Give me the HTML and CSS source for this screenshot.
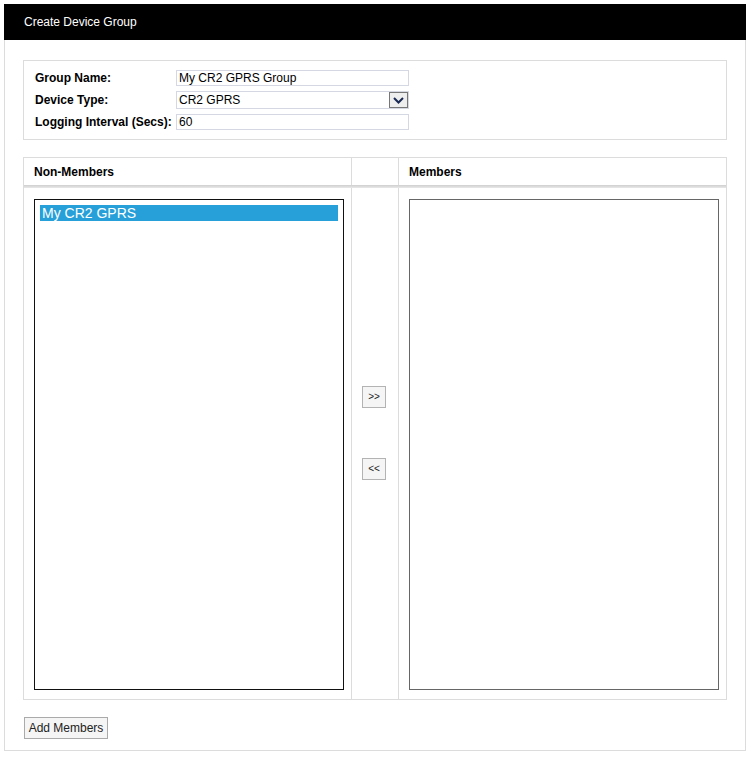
FILE: index.html
```html
<!DOCTYPE html>
<html>
<head>
<meta charset="utf-8">
<title>Create Device Group</title>
<link rel="stylesheet" href="styles.css">
</head>
<body>
<div class="panel">
  <div class="panel-title">Create Device Group</div>
  <div class="panel-body">
    <div class="form-box">
      <div class="form-row">
        <label class="form-label">Group Name:</label>
        <div class="text-input">My CR2 GPRS Group</div>
      </div>
      <div class="form-row">
        <label class="form-label">Device Type:</label>
        <div class="select-input">
          <span class="select-value">CR2 GPRS</span>
          <span class="select-btn">
            <svg width="11" height="7" viewBox="0 0 11 7"><path d="M1 1 L5.5 5.5 L10 1" fill="none" stroke="#1a2a55" stroke-width="2"/></svg>
          </span>
        </div>
      </div>
      <div class="form-row">
        <label class="form-label">Logging Interval (Secs):</label>
        <div class="text-input">60</div>
      </div>
    </div>

    <div class="members-table">
      <div class="mt-head">
        <div class="mt-cell mt-col1">Non-Members</div>
        <div class="mt-cell mt-col2"></div>
        <div class="mt-cell mt-col3">Members</div>
      </div>
      <div class="mt-shadow"></div>
      <div class="mt-body">
        <div class="mt-col1 mt-pad">
          <div class="listbox listbox-dark">
            <div class="list-item selected">My CR2 GPRS</div>
          </div>
        </div>
        <div class="mt-col2 mt-mid">
          <button class="move-btn">&gt;&gt;</button>
          <button class="move-btn">&lt;&lt;</button>
        </div>
        <div class="mt-col3 mt-pad">
          <div class="listbox listbox-gray"></div>
        </div>
      </div>
    </div>

    <button class="add-btn">Add Members</button>
  </div>
</div>
</body>
</html>
```

FILE: styles.css
```css
html, body {
  margin: 0;
  padding: 0;
  background: #fff;
}
body {
  padding: 4px;
  font-family: "Liberation Sans", Arial, sans-serif;
  font-size: 12px;
  color: #000;
}
.panel {
  width: 742px;
}
.panel-title {
  background: #000;
  color: #fff;
  height: 36px;
  line-height: 37px;
  padding-left: 20px;
  font-size: 12px;
}
.panel-body {
  border: 1px solid #dcdcdc;
  border-top: none;
  padding: 20px 18px 12px 18px;
  height: 678px;
}
.form-box {
  border: 1px solid #dcdcdc;
  padding: 9px 0 0 11px;
  box-sizing: content-box;
  height: 69px;
}
.form-row {
  display: flex;
  align-items: center;
  height: 16px;
  margin-bottom: 5px;
}
.form-row:nth-child(2) {
  height: 18px;
}
.form-label {
  width: 141px;
  font-weight: bold;
  font-size: 12px;
}
.text-input {
  width: 227px;
  height: 14px;
  border: 1px solid #d5d8e2;
  padding: 0 2px;
  font-size: 12px;
  line-height: 14px;
}
.select-input {
  width: 229px;
  height: 16px;
  border: 1px solid #d5d8e2;
  padding-left: 2px;
  display: flex;
  align-items: center;
  justify-content: space-between;
  font-size: 12px;
}
.select-btn {
  width: 17px;
  height: 14px;
  border: 1px solid #777;
  background: #eee;
  display: flex;
  align-items: center;
  justify-content: center;
}
.members-table {
  margin-top: 17px;
  border: 1px solid #dcdcdc;
  width: 702px;
}
.mt-head {
  display: flex;
  height: 27px;
}
.mt-cell {
  font-weight: bold;
  line-height: 29px;
  padding-left: 10px;
  box-sizing: border-box;
}
.mt-shadow {
  height: 3px;
  background: linear-gradient(#cfcfcf, #e8e8e8);
}
.mt-body {
  display: flex;
  height: 511px;
}
.mt-col1 {
  width: 328px;
  box-sizing: border-box;
  border-right: 1px solid #dcdcdc;
}
.mt-col2 {
  width: 47px;
  box-sizing: border-box;
  border-right: 1px solid #dcdcdc;
}
.mt-col3 {
  flex: 1;
}
.mt-pad {
  padding: 11px 0 10px 10px;
}
.listbox {
  width: 310px;
  height: 491px;
  box-sizing: border-box;
  padding: 5px;
}
.listbox-dark {
  border: 1px solid #111;
}
.listbox-gray {
  border: 1px solid #666;
}
.list-item {
  height: 16px;
  line-height: 16px;
  font-size: 14px;
  padding-left: 2px;
}
.list-item.selected {
  background: #279fd9;
  color: #fff;
}
.mt-mid {
  display: flex;
  flex-direction: column;
  align-items: center;
  padding-top: 198px;
  gap: 50px;
}
.move-btn {
  width: 24px;
  height: 22px;
  margin: 0 0 0 -2px;
  padding: 0;
  border: 1px solid #b3b3b3;
  background: #f5f5f5;
  font-family: "Liberation Sans", Arial, sans-serif;
  font-size: 10px;
  color: #222;
  line-height: 18px;
}
.add-btn {
  margin-top: 17px;
  margin-left: 1px;
  width: 84px;
  height: 22px;
  padding: 0;
  border: 1px solid #aaa;
  background: #f5f5f5;
  font-family: "Liberation Sans", Arial, sans-serif;
  font-size: 12px;
  color: #222;
}
```
